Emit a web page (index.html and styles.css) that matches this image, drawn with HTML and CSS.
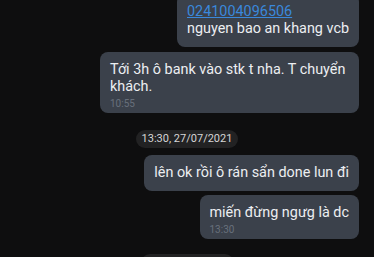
FILE: index.html
```html
<!DOCTYPE html>
<html lang="vi">
  <head>
    <meta charset="UTF-8" />
    <title>Chat</title>
    <link rel="stylesheet" href="styles.css">
  </head>
  <body>
    <div class="chat">
      <div class="msg first">
        <a class="link" href="#">0241004096506</a><br>nguyen bao an khang vcb
      </div>
      <div class="msg wide has-time">
        Tới 3h ô bank vào stk t nha. T chuyển khách.
        <div class="time">10:55</div>
      </div>

      <div class="date">13:30, 27/07/2021</div>

      <div class="msg">lên ok rồi ô rán sẩn done lun đi</div>
      <div class="msg has-time">
        miến đừng ngưg là dc
        <div class="time">13:30</div>
      </div>

      <!-- next day separator, scrolled below the fold -->
      <div class="date next"></div>
    </div>
  </body>
</html>
```

FILE: styles.css
```css
* {
  margin: 0;
  padding: 0;
  box-sizing: border-box;
}

html,
body {
  height: 100%;
  overflow: hidden;
}

body {
  font-family: Roboto, 'Noto Sans', sans-serif;
  background-color: #0e0e0f;
}

.chat {
  display: flex;
  flex-direction: column;
  align-items: flex-end;
  padding: 0 15px;
  margin-top: -6px;
}

.msg {
  background-color: #3b414b;
  color: #eceef1;
  font-size: 14.4px;
  line-height: 17px;
  padding: 9px 10px 10px;
  border-radius: 8px;
  margin-bottom: 4px;
  max-width: 259px;
}

.msg.first {
  margin-bottom: 5px;
}

.msg.has-time {
  padding-bottom: 4px;
}

.link {
  color: #3a88db;
  text-decoration: underline;
}

.time {
  font-size: 10px;
  line-height: 11px;
  margin-top: 3px;
  color: #68707c;
}

.date {
  align-self: center;
  background-color: #222223;
  color: #d6d6d6;
  font-size: 11px;
  line-height: 18px;
  padding: 0 6px;
  border-radius: 9px;
  margin: 13px 0 7px;
}

.date.next {
  width: 93px;
  height: 18px;
  margin-top: 11px;
}
```
